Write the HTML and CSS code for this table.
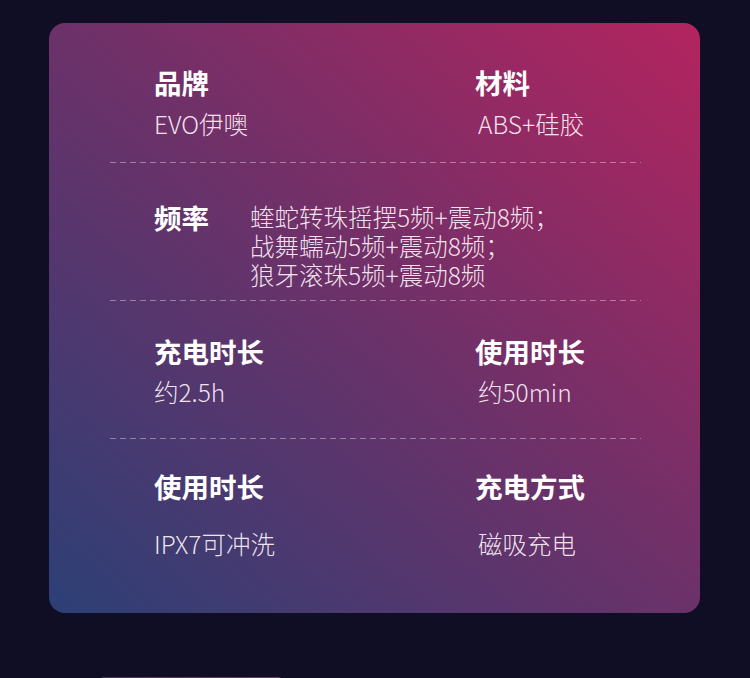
FILE: index.html
```html
<!DOCTYPE html>
<html lang="zh-CN">
<head>
  <meta charset="UTF-8" />
  <meta name="viewport" content="width=device-width, initial-scale=1.0"/>
  <title>产品参数</title>
  <link rel="stylesheet" href="styles.css">
</head>
<body>

<div class="spec-card">
  <!-- 品牌 / 材料 -->
  <div class="spec-row row-brand">
    <div class="spec-item">
      <h3 class="spec-title">品牌</h3>
      <p class="spec-value">EVO伊噢</p>
    </div>
    <div class="spec-item">
      <h3 class="spec-title">材料</h3>
      <p class="spec-value">ABS+硅胶</p>
    </div>
  </div>

  <div class="dash-line"></div>

  <!-- 频率 -->
  <div class="spec-row row-freq">
    <h3 class="spec-title freq-title">频率</h3>
    <p class="freq-value">
      蝰蛇转珠摇摆5频+震动8频；<br>
      战舞蠕动5频+震动8频；<br>
      狼牙滚珠5频+震动8频
    </p>
  </div>

  <div class="dash-line"></div>

  <div class="spec-row row-time">
    <div class="spec-item">
      <h3 class="spec-title">充电时长</h3>
      <p class="spec-value">约2.5h</p>
    </div>
    <div class="spec-item">
      <h3 class="spec-title">使用时长</h3>
      <p class="spec-value">约50min</p>
    </div>
  </div>

  <div class="dash-line"></div>

  <div class="spec-row row-last">
    <div class="spec-item">
      <h3 class="spec-title">使用时长</h3>
      <p class="spec-value">IPX7可冲洗</p>
    </div>
    <div class="spec-item">
      <h3 class="spec-title">充电方式</h3>
      <p class="spec-value">磁吸充电</p>
    </div>
  </div>
</div>

<div class="next-block"></div>

</body>
</html>
```

FILE: styles.css
```css
* {
  margin: 0;
  padding: 0;
  box-sizing: border-box;
}

body {
  background-color: #100e24;
  font-family: "Noto Sans CJK SC", "Noto Sans", sans-serif;
  color: #fff;
  padding-top: 23px;
  overflow: hidden;
}

.spec-card {
  width: 651px;
  height: 590px;
  margin-left: 49px;
  border-radius: 16px;
  background: linear-gradient(to top right, #2c4076 0%, #6c3169 50%, #b3245f 100%);
  padding: 42px 59px 0 61px;
}

.spec-row {
  display: flex;
  padding-left: 44px;
}

.spec-item {
  display: flex;
  flex-direction: column;
}

.spec-item:first-child {
  width: 321px;
  flex-shrink: 0;
}

.spec-title {
  font-size: 27.5px;
  line-height: 34px;
  font-weight: 700;
  color: #fff;
  white-space: nowrap;
}

.spec-value {
  font-size: 24.5px;
  line-height: 30px;
  font-weight: 300;
  color: rgba(255, 244, 250, 0.92);
  white-space: nowrap;
}

.spec-item:last-child .spec-value {
  padding-left: 3px;
}

.dash-line {
  height: 1px;
  background: repeating-linear-gradient(to right, rgba(255, 255, 255, 0.38) 0 6px, transparent 6px 10px);
}

/* row spacing */
.row-brand {
  padding-bottom: 23px;
}
.row-brand .spec-item {
  gap: 10px;
}

.row-freq {
  padding-top: 39px;
  padding-bottom: 11px;
}

.freq-title {
  line-height: 30px;
  width: 96px;
  flex-shrink: 0;
}

.freq-value {
  font-size: 24.5px;
  line-height: 29px;
  font-weight: 300;
  color: rgba(255, 244, 250, 0.92);
  white-space: nowrap;
}

.row-time {
  padding-top: 33px;
  padding-bottom: 31px;
}
.row-time .spec-item {
  gap: 9px;
}

.row-last {
  padding-top: 30px;
}
.row-last .spec-item {
  gap: 26px;
}

.next-block {
  width: 182px;
  height: 20px;
  margin: 64px 0 0 100px;
  background: linear-gradient(to right, #4b3556, #6a3f64);
  border-radius: 4px 4px 0 0;
}
```
